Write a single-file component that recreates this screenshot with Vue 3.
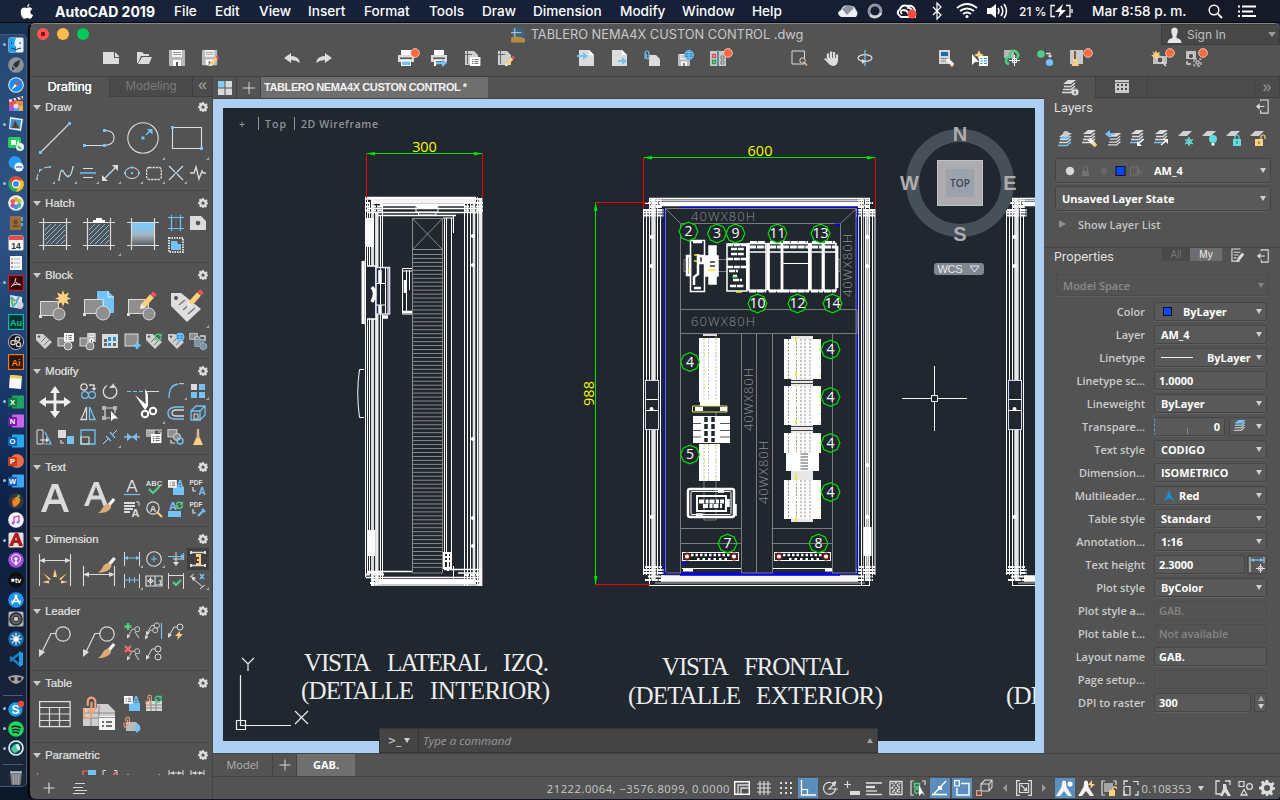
<script setup>
import { h } from 'vue'

const W = '#dcdcdc'
const B = '#73c3f6'
const Y = '#ffd080'
const G = '#4fce86'
const R = '#fb6a70'
const K = '#535353'
const s = (d, col = W, w = 1) => `<path d="${d}" fill="none" stroke="${col}" stroke-width="${w}"/>`
const f = (d, col = W) => `<path d="${d}" fill="${col}"/>`
const o = (x, y, r, fill = 'none', st = 'none', w = 1) =>
  `<circle cx="${x}" cy="${y}" r="${r}" fill="${fill}" stroke="${st}" stroke-width="${w}"/>`
const t = (x, y, size, txt, col = W, wt = 700) =>
  `<text x="${x}" y="${y}" font-size="${size}" font-weight="${wt}" fill="${col}" font-family="Liberation Sans, sans-serif" text-anchor="middle">${txt}</text>`
const g = (x, y, k, body) => `<g transform="translate(${x} ${y}) scale(${k})">${body}</g>`

const Icon = (p) => h('svg', { viewBox: `0 0 ${p.box || 16} ${p.box || 16}`, width: p.size || 16, height: p.size || 16, innerHTML: p.art })
Icon.props = ['art', 'box', 'size']

/* ---- shared parts ---- */
const brush = (x, y, k = 1) => g(x, y, k, s('M17 1L11 8', '#f2f2f2', 3.4) + f('M11 6L14 9Q12 16 0 16Q4 13 5 10Q7 6 11 6Z', '#dcab78'))
const pencil = (x, y, k = 1) => g(x, y, k, s('M3 14L12 4', Y, 5) + s('M12.5 3.5L15 1', '#f4535c', 5) + f('M0 17L1 11.5L5.5 16Z', '#eee'))
const page = f('M1 0H11L16 5V16H1Z') + f('M11 0V5H16Z', '#fff')
const badge = (x = 17, y = 3) => o(x, y, 4.4, '#ff6a3c', '#e9d5cd', 0.8)
const disk = (x = 0, y = 0, k = 1) => g(x, y, k, f('M0 0H16V16H0Z', '#b9b9b9') + f('M3 0H13V7H3Z', '#f4f4f4') + s('M4 2.5H12M4 4.5H12', '#999') + f('M4 10H12V16H4Z', '#fff') + f('M7 12H9V16H7Z', '#555'))
const layers = (c3 = W) => f('M6 0H14L9 4H1Z') + s('M2 6.5H9L13 3', W, 1.3) + s('M1 9.5H9L13 6', W, 1.3) + s('M0 12.5H9L13 9', c3, 1.3)
const tbl = (x, y, k) => g(x, y, k, f('M0 0H16V14H0Z', '#fff') + s('M3 4H5M7 4H13M3 7H5M7 7H13M3 10H5M7 10H13', '#666', 1.5))
const globe = (x, y, r) => o(x, y, r, '#3d8fca', B) + s(`M${x - r} ${y}H${x + r}M${x} ${y - r}V${y + r}M${x - r + 1} ${y - 2.5}H${x + r - 1}M${x - r + 1} ${y + 2.5}H${x + r - 1}`, '#7dd0ff', 0.8)
const tag = f('M0 1H7L16 9L9 16L0 7Z', '#cfcfcf') + o(3, 3.6, 1.2, K) + s('M5 9L10 4M8 12L13 7', '#777', 1)
const blk = (x, y, k, c1 = W) => g(x, y, k, `<rect x="1" y="3" width="10" height="8" fill="#8d8d8d" stroke="${c1}"/><circle cx="11" cy="11" r="4" fill="#8d8d8d" stroke="${c1}"/>`)
const cyc = (x, y, k) => g(x, y, k, s('M2 6A5 5 0 0 1 11 4M12 7A5 5 0 0 1 3 10', G, 2.4) + f('M13 0V6H7ZM1 13V7H7Z', G))
const link = (x, y, k) => g(x, y, k, s('M3 7V3.5A3 3 0 0 1 9 3.5V9A3 3 0 0 1 3 9M6 7V4M6 7V14A3 3 0 0 1 0 14V9', '#f0a47c', 1.7))
const leader = (x, y, k) => g(x, y, k, s('M1 14L6 5H9') + o(12, 5, 3, 'none', W) + f('M0 16L0 11L4 13Z'))

/* ---- left tool palettes: big tools span two columns and rows ---- */
const hatchFrame = s('M0 4.5H32M0 27.5H32M4.5 0V32M27.5 0V32', W, 1.2)
const hatchLines = s('M6 12L12 6M6 17L17 6M6 22L22 6M7 26L26 7M12 26L26 12M17 26L26 17M22 26L26 22', B)
const big = (art, more) => ({ big: true, art, more })
const sm = (art, more, on) => ({ art, more, on })
const none = { art: '' }

const sections = [
  { name: 'Draw', tools: [
    big(s('M2 30L30 2', W, 1.1) + f('M0 29H3V32H0ZM29 0H32V3H29Z', B)),
    big(s('M2 23.5H21M21 8.5Q31 8 31 16Q31 23 21 23.5', W, 1.1) + f('M0 22H3V25H0ZM20 22H23V25H20ZM20 7H23V10H20Z', B)),
    big(o(16, 16, 15.2, 'none', W, 1.1) + f('M14.5 14.5H17.5V17.5H14.5ZM20 7H25.5V12.5Z', B) + s('M19 13L24 8', B, 1.4), 1),
    big(s('M1.5 5.5H30.5V26.5H1.5Z', W, 1.1) + f('M0 4H3V7H0ZM29 25H32V28H29Z', B), 1),
    sm(s('M1 14Q2 2 14 2', W) .replace('/>', ' stroke-dasharray="5 2"/>') + f('M0 13H2V15H0ZM3 4H5V6H3ZM13 1H15V3H13Z', B), 1),
    sm(s('M1 15Q3 2 5 6T10 12Q13 12 15 2', W, 1.2) + f('M0 14H2V16H0ZM4 5H6V7H4ZM10 10H12V12H10ZM14 1H16V3H14Z', B), 1),
    sm(s('M3 3.5H13M3 12.5H13', W, 1.2) + s('M0 8H16', B, 1.3), 1),
    sm(s('M2 14L14 2', W, 1.3) + f('M0 16V10L6 16ZM16 0V6L10 0Z') + f('M7 7H9V9H7Z', B), 1),
    sm('<ellipse cx="8" cy="8" rx="7" ry="5.5" fill="none" stroke="#dcdcdc"/>' + f('M7 7H9V9H7ZM7 1.5H9V3.5H7ZM0 7H2V9H0ZM14 7H16V9H14Z', B), 1),
    sm('<rect x=".7" y="2.5" width="14.6" height="12" rx="2.5" fill="none" stroke="#dcdcdc" stroke-width="1.3" stroke-dasharray="2.4 .9"/>', 1),
    sm(s('M1 1L7 7M15 1L9 7M7 9L1 15M9 9L15 15', W, 1.1) + f('M7 7H9V9H7Z', B), 1),
    sm(s('M0 8H4L6 2L9 14L12 6L13 8H16', W, 1.4)),
  ] },
  { name: 'Hatch', tools: [
    big(hatchFrame + hatchLines),
    big(hatchFrame + hatchLines + f('M10 2H13V0H19V2H22V5H10Z', '#fff'), 1),
    big('<defs><linearGradient id="hg" x2="0" y2="1"><stop offset=".15" stop-color="#7cc9fa"/><stop offset=".55" stop-color="#a5b4c0"/><stop offset="1" stop-color="#555"/></linearGradient></defs><rect x="4" y="4" width="24" height="24" fill="url(#hg)"/>' + hatchFrame),
    sm(s('M0 2.5H16M0 13.5H16M3.5 0V16M12.5 0V16', B, 1.2)), sm(f('M0 1H11L16 6V15H0Z') + o(8, 8, 2.3, K)),
    sm(s('M1 1H15V15H1Z', W, 2).replace('/>', ' stroke-dasharray="1.5 1"/>') + f('M3 4H9L10 7H13V13H3Z', B)), none,
  ] },
  { name: 'Block', tools: [
    big(f('M1 11H19V25H1Z', '#8f8f8f') + s('M1.5 11.5H19.5V25.5H1.5Z') + o(20, 24, 6, '#8f8f8f', W) + f('M0 25H3V28H0Z') + f('M24 0L25.5 4.5L30 2.5L28 7L32 8.5L28 10L30 14.5L25.5 12.5L24 17L22.5 12.5L18 14.5L20 10L16 8.5L20 7L18 2.5L22.5 4.5Z', Y)),
    big(f('M14 1H25L31 7V23H14Z', B) + s('M25 1V7H31', '#dff2ff') + f('M1 9H19V23H1Z', '#8f8f8f') + s('M1.5 9.5H20.5V23.5H1.5Z') + o(20, 23, 7, '#8f8f8f', W) + f('M0 23H3V26H0Z')),
    big(f('M1 9H21V23H1Z', '#8f8f8f') + s('M1.5 9.5H21.5V23.5H1.5Z') + o(22, 24, 6, '#8f8f8f', W) + f('M0 23H3V26H0Z') + pencil(13, 2, 1)),
    big(f('M0 3H10L30 19L16 32L0 16Z', '#dedede') + o(5, 8, 2, K) + s('M8 15L14 10M12 20L21 12M17 24L24 18', '#777', 1.4) + pencil(16, 0, 1), 1),
    sm(tag), sm(blk(-1, 2, 1) + tbl(6, 0, 0.62)), sm(blk(-1, 2, 1) + disk(7, 0, 0.56)),
    sm(f('M0 1H16V15H0Z') + f('M2 6H5V9H2ZM2 10H5V13H2Z', '#666') + f('M6 4H9V8H6ZM6 10H9V13H6ZM11 4H14V8H11Z', '#1594e8') + f('M11 10H14V13H11Z', '#666')),
    sm('<rect x="1" y="1" width="13" height="12" fill="#8d8d8d" stroke="#dcdcdc"/>' + s('M13 9V16M9.5 12.5H16.5', B, 2.6)),
    sm(tag + cyc(8, 0, 0.6)), sm(tag + globe(12, 4, 4)), sm(blk(-1, -2, 0.75) + s('M10 3H15V8', W, 1.4) + blk(4, 4, 0.85, B)),
  ] },
  { name: 'Modify', tools: [
    big(f('M16 0L21 7H17.4V14.6H25V11L32 16L25 21V17.4H17.4V25H21L16 32L11 25H14.6V17.4H7V21L0 16L7 11V14.6H14.6V7H11Z', '#f0f0f0')),
    sm(o(4, 4, 3.2, 'none', W, 1.2) + s('M9 2H14V6', W, 1.3) + f('M11.5 5H16.5L14 8Z') + o(5, 12, 3.4, 'none', B, 1.2) + o(12, 12, 3.4, 'none', B, 1.2)),
    sm(s('M5 2.5A6.8 6.8 0 1 0 11.5 2.7', W, 1.4) + f('M12 0V5H7Z')),
    big(s('M0 5.5H17', B, 1.1).replace('/>', ' stroke-dasharray="4 2"/>') + s('M19 5.5H32', W, 1) + f('M18 3L21 8V20L19 22ZM8 9L21 20L18 24Z', '#fff') + o(18, 28, 3.2, 'none', '#fff', 2) + o(26, 25, 3.2, 'none', '#fff', 2), 1),
    sm(s('M1 15Q1 2 10 1', B, 1.3) + s('M11 .7H16', W), 1), sm(f('M1 1H7V7H1Z') + f('M9 1H15V7H9ZM1 9H7V15H1ZM9 9H15V15H9Z', B), 1),
    sm(s('M6.5 2V14.5H1Z', W, 1.3) + s('M9.5 2V14.5H15Z', B, 1.3)), sm(s('M2 3H14M3 2V14M2 13H8M13 2V8', W, 1.2) + f('M0 1H4V5H0ZM11 1H15V5H11ZM0 11H4V15H0Z', '#b5b5b5') + f('M9 6V16L12 13.5H16Z', '#fff')),
    sm(s('M16 2H7Q0 3 0 8Q0 14 7 14H16', B, 1.4) + s('M16 5H8Q4 5 4 8Q4 11 8 11H16', W, 1.3)), sm(s('M1 6H10V15H1ZM1 6L6 1H15V10L10 15M10 6L15 1', B, 1.3) + s('M4 9H8V14H4Z')),
    sm(s('M1 1H7V15H1Z', W, 1) + s('M9 3L15 15H8', B, 1.2) + s('M4 11H11', W, 1.2) + f('M10 8L13 11L10 14Z')),
    sm(f('M0 1H8V9H0Z') + s('M3 11V14H6', W, 1.2) + f('M9 7H16V15H9Z', B)), sm(s('M1 1H15V15H1Z', B, 1.3) + s('M1 8H9V15H1Z', W, 1.2)),
    sm(s('M1 15L6 10M10 6L15 1') + s('M4 7L9 12M8 3L13 9', B, 1.3), 1), sm(s('M0 8H16', W) + f('M3 4L8 8L3 12ZM13 4L8 8L13 12Z', B)),
    sm(f('M0 1H9V8H0Z', '#aaa') + s('M0 1H16M12 3H15V6', W, 1.2) + tbl(5, 5, 0.65)), sm(blk(-1, -2, 0.9) + s('M3 11V14H7', W, 1.2) + o(12, 12, 3, 'none', B, 1.4)),
    sm(f('M7 0H9L9.5 9H6.5Z', '#e0b98c') + f('M6 9H10L13 16H3Z', Y)),
  ] },
  { name: 'Text', tools: [
    big(f('M13 2H19L30 30H25L21.8 22H10L7 30H2ZM12 17.5H20L16 6.5Z', '#dadada').replace('/>', ' fill-rule="evenodd"/>')),
    big(f('M11 0H15.5L25 24H20.5L18 17.5H8L5.5 24H1ZM9.6 13.6H16.4L13 4.5Z', '#dadada').replace('/>', ' fill-rule="evenodd"/>') + brush(15, 16, 0.95)),
    sm(t(8, 13, 17, 'A', W, 400) + s('M0 15.5H16', B, 1.2)), sm(t(8, 6.5, 7.6, 'ABC') + s('M3 10L7 14L14 7', G, 2.2)),
    sm(f('M5 8H16V16H5Z', B) + tbl(0, 1, 0.55) + t(12, 9, 10, 'A', B)), sm(t(6, 5.5, 6.6, 'PDF') + s('M3 8V12H6', W, 1.2) + t(12, 15.5, 10, 'A', B)),
    sm(s('M0 2H11M0 5H11M0 8H9M0 11H6', W, 1.8) + s('M12 1H15V5') + t(11.5, 16, 11, 'A')), sm(o(7, 7, 6.2, 'none', W, 1.2) + t(7, 10.5, 9, 'A') + s('M11 11L16 16', Y, 2)),
    sm(t(5, 9, 11, 'A', B) + cyc(7, 0, 0.62) + f('M0 10H13V16H0Z', B)), sm(t(6, 5.5, 6.6, 'PDF') + s('M3 8V12H6', W, 1.2) + s('M8 15L14 9M12 8L15 11', B, 2.2)),
  ] },
  { name: 'Dimension', tools: [
    big(s('M.5 0V32M31.5 0V32M2 6.5H30', W, 1.1) + f('M0 6.5L6 4V9ZM32 6.5L26 4V9Z') + g(16, 28, 1, f('M-2 -5L0 -13L2 -5ZM-12 -9L-4 -3L-6 -2ZM12 -9L4 -3L6 -2ZM-13 0L-6 -1.5V1.5ZM13 0L6 -1.5V1.5Z', Y))),
    big(s('M.5 12V32M31.5 12V32M2 20.5H30', W, 1.1) + f('M0 20.5L6 18V23ZM32 20.5L26 18V23Z') + brush(15, 3, 0.98)),
    sm(s('M.5 1V15M15.5 1V15') + s('M1 7H15', B) + f('M0 7L4 5V9ZM16 7L12 5V9Z', B), 1), sm(o(8, 8, 7.3, 'none', W, 1.1) + s('M8 5V11M5 8H11', B), 1),
    sm(s('M8 1V13M5 8H16', W) + s('M0 5.5H13M15.5 2V9', B, 1.2) + f('M13 3V8L16 5.5Z', B) + f('M5 11H11L8 15Z')), sm(s('M1 1.5H15M1 14.5H15', W, 1.3) + f('M0 0H2V3H0ZM14 0H16V3H14ZM0 13H2V16H0ZM14 13H16V16H14Z') + f('M6 3H11V14H6V12H9V10H7V8H9V6H6Z', Y), 0, 1),
    sm(s('M.5 1V15M15.5 1V15') + s('M0 7H16M5.5 4V10M10.5 4V10', B), 1), sm(s('M0 3H16V13H0ZM9 3V13', W, 1.2) + s('M1 8H8M4.5 4V12') + o(4.5, 8, 2, 'none', W) + t(13, 12, 8, '.1')),
    sm(s('M.5 0V16M15.5 0V16M1 2.5H15') + s('M5 9L8 12L13 7', G, 2.2)), sm(s('M2 5L13 14M0 4L4 1M10 16L15 12') + f('M1 3L6 5L3 8Z') + s('M10 1L14 6M14 1L10 6', B, 1.5), 1),
  ] },
  { name: 'Leader', tools: [
    big(s('M2 28L12 7.5H17', W, 1.2) + o(24, 8, 7.2, 'none', W, 1.2) + f('M0 31V23L6 26Z')),
    big(s('M2 28L12 7.5H17', W, 1.2) + o(24, 8, 7.2, 'none', W, 1.2) + f('M0 31V23L6 26Z') + brush(15, 17, 0.95)),
    sm(s('M4 0V7M.5 3.5H7.5', G, 2.4) + leader(3, 2, 0.85) + s('M11 9L15 15', W)), sm(leader(-1, 3, 0.85) + leader(0, -2, 0.9) + s('M15.5 0V16', B, 1.2)), sm(leader(0, -1, 1) + f('M12 8L7 13H10L9 17L15 11H12Z', Y)), none,
    sm(s('M1 1L7 7M7 1L1 7', R, 2.2) + leader(3, 2, 0.85) + s('M11 9L15 15', W)), sm(leader(0, -1, 1) + o(12, 12, 3, 'none', W)), none, none,
  ] },
  { name: 'Table', tools: [
    big('<rect x=".6" y="3.6" width="30.5" height="25" fill="none" stroke="#dcdcdc" stroke-width="1.3"/>' + s('M0 9.5H31M0 16H31M0 22.5H31M10.5 9V29M20.5 9V29', W, 1.2)),
    big(f('M0 10H14V6H25L32 13V28H0Z', '#cfcfcf') + s('M0 15H32M0 20H32M8 10V28M16 7V28', '#888') + link(1, -1, 1.25) + f('M16 18H32V32H16Z', '#f4f4f4') + s('M16 19.5H32', '#999') + s('M19 24H21M23 24H29M19 28H21M23 28H29', '#444', 1.4)),
    sm(f('M5 8H16V16H5Z', B) + tbl(0, 1, 0.55) + t(12, 9, 10, 'A', B)), sm(f('M2 6H16V16H0V8Z') + s('M0 10H16M0 13H16M5 6V16M10 6V16', '#888') + link(0, 0, 0.6) + cyc(8, 0, 0.6)), none, none,
    sm(f('M2 5H12L16 9V14H2Z', '#bbb') + link(0, 0, 0.6) + s('M13 7V13', B, 3) + f('M9 11H17L13 16Z', B)), none, none, none,
  ] },
  { name: 'Parametric', tools: [
    sm(s('M1.500 7V16', R, 1.2)), none, sm(s('M3 16V5H8', R, 1.2) + f('M8 4H16V11H8Z', B)), sm(s('M4 4.500H1V16M12 4.500H15V16') + s('M4 11L7 14L14 6', R, 1.4) + f('M9 14L12 11L16 14Z', Y)),
    sm(s('M4 8V16M8 12V16')), sm(s('M2 12V16M13 8V16M11 12V16')), sm(s('M1 4V16M15 4V16M1 7H15') + f('M3 7L6 5V9ZM13 7L10 5V9Z') + f('M6 10H11V14H6Z', B)), sm(s('M1 4V16M14 4V16M1 7H14') + f('M3 7L6 5V9ZM12 7L9 5V9Z') + f('M9 11H15V15H9Z', Y)),
  ] },
]

/* ---- main toolbar ---- */
const printer = f('M3 0H13V6H3Z', '#fff') + f('M0 5H16V12H0Z') + f('M2 7.500H14V9H2Z', '#555') + f('M3 10H13V16H3Z', '#fff')
const plots = f('M1 1H10L14 5V15H1Z', '#cfcfcf') + s('M3.5 0V14M0 4.5H8', '#666')
const toolbar = [
  [f('M0 2H11V8H16V14H0Z', W) + f('M12 2L16 6V7H12Z', W), f('M1 2H6L8 4H13V6H5L2 13H1Z') + f('M6 7H16L13 14H2Z'), disk(), disk(0, 0, 0.95) + pencil(7, 6, 0.6)],
  [f('M0 8L7 3V6Q15 6 16 13Q12 10 7 10V13Z'), f('M16 8L9 3V6Q1 6 0 13Q4 10 9 10V13Z')],
  [printer + f('M4 11.500H12V15H4Z', B) + badge(17, 3), printer + f('M5 11H12V16H5Z', K) + s('M5 13H12', B, 2.4) + f('M11 9V17L16 13Z', B), plots + tbl(6, 7, 0.65), plots + pencil(8, 6, 0.6)],
  [page + s('M-1 6H7', B, 2.2) + f('M5 2V10L10 6Z', B), page + s('M7 11H12', B, 2.2) + f('M11 7V15L16 11Z', B), f('M5 5H12L16 9V16H5Z') + s('M1 9V3A2 2 0 0 1 5 3V8A1.500 1.500 0 0 1 2.500 8V4', B, 1.2), disk(1, 4, 0.75) + globe(12, 5, 4.5), f('M0 1H7V16H0ZM9 1H16V16H9Z', '#c9c9c9') + s('M8 0V16', B) + s('M2.5 4.5H5.5V7.5H2.5Z', '#e5484f', 1.3) + s('M2.5 10.5H5.5V13.5H2.5Z', '#14a354', 1.3) + s('M11 6H14V9H11ZM11 11H14V14H11Z', '#777') + badge(18, 3)],
  [s('M1 1H13.5V14H1Z', W) + o(11.5, 10.5, 2.7, K, W) + s('M13.5 12.5L16 15.5', '#e5b596', 1.4), s('M4 9V3.4M7 8V1.4M10 8V2M13 9V4.5', W, 2.2) + f('M3 8H14V11Q13 16 9 16Q6 16 4 13L0 9L1.5 8L4 10Z'), '<ellipse cx="8" cy="8" rx="7" ry="3.4" fill="none" stroke="#dcdcdc" stroke-width="1.2"/>' + s('M8 0V16', B, 1.3) + f('M5 9L9 11.3L5 14Z')],
  [f('M0 0H11V14H0Z', '#d5d5d5') + f('M2 2H9V6H2Z', '#1f6ca4') + s('M2 8.5H9M2 11H7', '#888') + s('M8 9L14 15', '#fff', 3.2) + s('M12 14L14 16', '#ffdca0', 3), f('M0 4V15L3 12H7Z', '#fff') + f('M7 0L8.5 3.5L12 5L8.5 6.5L7 10L5.5 6.5L2 5L5.5 3.5Z', Y) + f('M7 6H16V16H7Z', '#fff') + s('M8.5 8.5H10.5M12 8.5H15M8.5 11H10.5M12 11H15M8.5 13.5H10.5M12 13.5H15', '#1594e8', 1.2), f('M0 0H10V8H0Z', '#b7b7b7') + s('M5 14A3.500 3.500 0 1 1 6 7A4.200 4.200 0 1 1 13 8', G, 2.6) + s('M10.5 5V16M5 10.5H16', '#fff', 1.1) + s('M8.5 8.5H12.5V12.5H8.5Z', '#fff'), o(4, 4, 3.8, G) + s('M9 3.5H13V6', W, 1.3) + f('M10.5 5.5H15.5L13 8Z') + o(12.5, 12.5, 3.6, B), f('M0 0H13V14H0Z', '#c9c9c9') + s('M5 1V9', '#8a5a35', 2) + f('M4 9H6.500L9 16H1.500Z', Y) + badge(18, 3)],
  [f('M1 6H15V14H1Z', '#bfbfbf') + f('M4 0L5 3L8 2L7 5L9 6L6 7L4 10L3 7L-1 6L2 4L0 1L3 3Z', Y) + o(8, 10, 3, K, W) + s('M10 12L14 16', W, 1.4) + badge(18, 3), f('M1 1H11V9H1Z', '#bfbfbf') + o(6, 6, 2.8, K, W) + s('M2 11V14H6', W, 1.3) + s('M9 9H16V16H9Z', W, 1).replace('/>', ' stroke-dasharray="3 2"/>') + s('M11 11H14V14H11Z') + badge(18, 3)],
]

/* ---- layer tools ---- */
const sheet = f('M5 1H14L9 6H0Z', '#d2d2d2')
const layerTools = [
  g(0, 3, 1, layers(B) + f('M5 3H14L9 6H1Z', B)) + o(8, 4, 3, '#ccc'), layers() + s('M7 9L13 15', '#eee', 3.6) + s('M11 13L14 16', Y, 3.4), g(2, 3, 0.95, layers()) + s('M2 4H9', B, 2) + f('M-1 4L4 0V8Z', B), layers(B) + s('M14 9L8 14', '#fff', 1.2) + f('M7 11V16H12Z', '#fff'), layers(B) + s('M7 15L13 10', '#fff', 1.2) + f('M9 9H14V14Z', '#fff'),
  sheet + s('M11 7V16M7 9.5L15 14M15 9.5L7 14', '#5fe0d6', 1.4) + o(11, 11.6, 2.5, 'none', '#5fe0d6'), sheet + o(11, 9, 4, '#5fdde0') + f('M9.5 13H12.5V15.5H9.5Z', '#fff'), sheet + f('M7 9H15V16H7Z', '#5fdde0') + s('M9 9V7A2 2 0 0 1 13 7V9', '#5fdde0', 1.2) + f('M10.5 11H11.5V14H10.5Z', '#24747c'), sheet + f('M5 9H13V16H5Z', Y) + s('M11 9V7A2 2 0 0 1 15 7V9', Y, 1.2) + f('M8.5 11H9.5V14H8.5Z', '#735828'),
]

/* ---- status bar ---- */
const human = (x = 0) => g(x, 0, 1, o(8, 2.5, 1.9, '#fff') + f('M6 3H10L10.5 7L16 16H12L8 11L4 16H0L5.5 7Z', '#f4f4f4'))
const status = [
  { a: s('M.7 1.7H15.3V14.3H.7Z', '#fff', 1.4) + s('M4 14V5H15M7 14V8H15', W, 1.3) },
  { a: s('M4 1V15M8 1V15M12 1V15M1 4H15M1 8H15M1 12H15', W, 1.2) },
  { a: f('M2 2H4V4H2ZM7 2H9V4H7ZM12 2H14V4H12ZM2 7H4V9H2ZM7 7H9V9H7ZM12 7H14V9H12ZM2 12H4V14H2ZM7 12H9V14H7ZM12 12H14V14H12Z') },
  { a: s('M1.5 0V15H16', '#fff', 1.3) + s('M1.5 9.5H7.5V15', '#fff', 1.2), on: 1 },
  { a: s('M13.5 8A6 6 0 1 1 9 2.500M6 9H16M7 9L14 2', W, 1.2) + f('M9 3L14 1L13 7Z', W) },
  { a: s('M3.5 1V8M0 4.5H7', W, 1.2) + f('M6 11H16V15H6Z') },
  { a: s('M0 3H16', W, 1.6) + s('M0 7H9', W, 2.5) + s('M0 11H11', W, 1.4) + s('M0 14.5H16', W, 1.4) },
  { a: s('M2 1.5H14V14.5H2Z', W, 1.3) + s('M4 3L12 13M12 3L4 13M4 8L8 3L12 8L8 13Z', W, 1.8).replace('/>', ' stroke-dasharray="1.5 1.2"/>') },
  { a: s('M4 1H1V15H4M12 1H15V5', W, 1.2) + s('M4.5 3.5H9.5V7H4.5Z', G, 1.6) + o(7, 11, 2.3, 'none', G, 1.4) + f('M9 5V16L12 13L15 16Z', '#fff') },
  { a: s('M1 15L14 1M0 14.5H15', '#fff', 1.4) + f('M6 6H10V10H6Z', '#fff'), on: 1 },
  { a: s('M7 3.5H15V15H3V8', '#fff', 1.4) + s('M.7 .7H5.3V6H.7Z', '#fff', 1.2), on: 1 },
  { a: s('M5 4H13V11H5ZM5 4L9 0H16V7L13 11M13 4L16 0', W, 1.1) + s('M.6 10.6H5.4V15.4H.6Z', '#f3a17b', 1.2) },
  { a: f('M10 4V12L6 8Z', '#999') },
  { a: s('M4 .7H.7V15.3H4M12 .7H15.3V15.3H12', W, 1.3) + s('M3.5 3.5H12.5V12.5H3.5ZM5 5L10 10', W, 1.2) + f('M11 7V11H7Z') },
  { a: f('M6 4V12L10 8Z', '#999') },
  { a: human(-1) + o(13, 4, 2.6, '#fff'), on: 1 },
  { a: human(-1) + f('M13 0L9 5H12L11 9L16 4H13Z', Y) },
  { a: s('M4 1H1V15H4M12 1H15V5', W, 1.2) + f('M3 3H12V12H3Z', '#a4a4a4') + f('M8 10H14V16H8Z', Y) + s('M12 10V8A2 2 0 0 1 15.5 8V9', Y, 1.3) },
  { a: s('M5 1H1V5M1 11V15H4M12 15H15V11', W, 1.3) + s('M1 6.500H7V15H1ZM10 1.500H15V5', W, 1.2) },
]
const status2 = [
  s('M1 5V1H5M10 1H15V5M1 5V14H6', W, 1.3) + f('M8 4H11L12 9L16 16H12.5L10 12L7.5 16H5L8 9Z'),
  s('M2 1.5H7V6.5H2Z', W, 1.2) + o(12.5, 6.5, 2.9, 'none', W, 1.3) + s('M7 9.5L10 15H4Z', W, 1.3),
  f('M6.7 0H9.3L9.8 2.3L12 3.2L14 1.8L15.4 4L13.8 6L14 7L16 7.5V9.5L13.8 10L13 12L14.2 14L12 15.4L10.2 13.8L9 16H7L6.2 13.8L4 14.8L2 13.5L2.8 11.3L2 9.8L0 9.3V6.8L2.2 6.2L3 4L1.8 2L4 .8L6 2.4ZM8 5A3 3 0 1 0 8 11A3 3 0 1 0 8 5Z').replace('/>', ' fill-rule="evenodd"/>'),
]
const gear = f('M6.7 0H9.3L9.8 2.3L12 3.2L14 1.8L15.4 4L13.8 6L16 7.5V9.5L13.8 10L14.2 14L12 15.4L10.2 13.8L9 16H7L6.2 13.8L4 14.8L2 13.5L2.8 11.3L0 9.3V6.8L2.2 6.2L1.8 2L4 .8L6 2.4ZM8 5.4A2.6 2.6 0 1 0 8 10.6A2.6 2.6 0 1 0 8 5.4Z').replace('/>', ' fill-rule="evenodd"/>')
const dockIn = s('M6 2.5V1H14V15H6V12', W, 1.2) + s('M3 8H10', W, 1.3) + f('M1 8L5 4.5V11.5Z')

/* ---- dock ---- */
const rr = (c) => `<rect x=".5" y=".5" width="15" height="15" rx="1.5" fill="${c}"/>`
const adobe = (bg, fg, txt) => `<rect x=".6" y=".6" width="14.8" height="14.8" fill="${bg}" stroke="${fg}" stroke-width="1.1"/>` + t(8, 11.5, 9, txt, fg)
const office = (c1, c2, l) => `<rect x="4" y="1.5" width="12" height="13" rx="1" fill="${c1}"/><rect x="0" y="4" width="9" height="9" rx="1" fill="${c2}"/>` + t(4.5, 11.3, 7.5, l, '#fff')
const app = (n, a, dot, k) => ({ n, a, dot, k })
const dock = [
  app('finder', rr('#e8f1f8') + f('M1 1H8Q6 5 6.5 9H8V15H1Z', '#1da5f2') + s('M3.5 5V7M12 5V7M3 11Q8 14 13 11', '#18385c', 1), 1),
  app('launch', o(8, 8, 7.8, '#8d9499') + f('M12 3Q7 4 5 8L8 11Q12 8 12 3ZM4 9L7 12L4 13Z', '#2f3437')),
  app('safari', o(8, 8, 7.8, '#e6e9ec') + o(8, 8, 6.8, '#1c8af0') + f('M13 3L9 9L7 7Z', '#f0433a') + f('M3 13L7 7L9 9Z', '#fff')),
  app('cut', f('M1 5H15V14Q15 15 14 15H2Q1 15 1 14Z', '#f2b43e') + f('M1 5H8V10H1Z', '#ed4f58') + f('M8 5H15V10H8Z', '#f7853c') + f('M1 10H6V15H2Q1 15 1 14Z', '#a25be0') + f('M6 10H11V15H6Z', '#4aa6ee') + o(8, 10, 2.5, '#f4dce8') + f('M1 3.500L15 0V3L1 6Z', '#e4e4e4') + s('M4 3L6 5M8 2L10 4M12 1L14 3', '#333', 1.6)),
  app('preview', f('M2 1L15 3L13 15L1 13Z', '#e8eef4') + f('M3 3L13 4L12 13L2 12Z', '#468dcc') + f('M7 4L11 12H4Z', '#54422e'), 1),
  app('facetime', `<rect x="0" y="1" width="13" height="11" rx="2" fill="#28cf57"/>` + f('M3 4H8V9H3ZM9 6L11 4V9L9 7Z', '#fff') + o(12, 11, 4, '#ecf7ee') + s('M10 10L13 13', '#24bc4d', 1.7)),
  app('messages', o(7, 6.5, 6.5, '#2899f5') + o(11, 11, 4.6, '#eef5fb') + s('M8 11H14', '#4c88bd', 1.5)),
  app('chrome', o(8, 8, 7.8, '#34a853') + f('M1.5 4A7.8 7.8 0 0 1 15 4.5H8L5 9.5Z', '#ea4335') + f('M15 4.5A7.8 7.8 0 0 1 8 15.8L11 9L8 4.5Z', '#fbc116') + o(8, 8, 3.6, '#4285f4', '#fff', 1.2), 1),
  app('photos', o(8, 8, 7.8, '#f5f5f5') + o(8, 4.5, 2.4, '#f9a233') + o(11.3, 6.5, 2.4, '#aacb4c') + o(11, 10.5, 2.4, '#48b7a2') + o(8, 12, 2.4, '#4b8fd6') + o(4.8, 10.5, 2.4, '#a05fba') + o(4.8, 6.3, 2.4, '#ec5a51')),
  app('contacts', f('M2 1H13V15H2Z', '#9a6b3d') + f('M13 2H15V6H13ZM13 8H15V11H13Z', '#67b5a3') + o(7.5, 7, 2.3, '#714a25') + f('M4 12Q7.5 7 11 12Z', '#714a25')),
  app('calendar', rr('#f5f5f5') + f('M1 1H15V5H1Z', '#ea4a45') + t(8, 13.5, 8.5, '14', '#333')),
  app('reminders', f('M2 1H14V15H2Z', '#f6f6f6') + s('M6 4H12M6 8H12M6 12H12', '#b5b5b5') + o(4, 4, 1, '#f0912c') + o(4, 8, 1, '#e34a42') + o(4, 12, 1, '#3a86dd')),
  app('acrobat', `<rect x=".6" y=".6" width="14.8" height="14.8" fill="#3a0505" stroke="#c11b20" stroke-width="1.2"/>` + s('M8 3Q8 8 3 12M8 7Q9 10 13 10M5 10Q9 9 12 9', '#f2dfdf'), 1),
  app('maps', f('M2 1L14 3L14 15L2 13Z', '#e4e6df') + s('M3 3L12 12M11 3L5 13', '#4ba3e6', 2) + s('M4 8H8', '#f2cf50', 2) + s('M3 4L5 13', '#62bd62', 2) + o(12, 11, 3.5, '#ccd2d6')),
  app('audition', adobe('#00302f', '#00c8a8', 'Au')),
  app('obs', o(8, 8, 7.6, '#151517', '#c4c4c6', 0.9) + o(9.500, 5, 2.2, '#151517', '#d2d2d3', 1.3) + o(5, 8.500, 2.2, '#151517', '#d2d2d3', 1.3) + o(10.500, 10.500, 2.2, '#151517', '#d2d2d3', 1.3)),
  app('illustrator', adobe('#2e1404', '#f58220', 'Ai')),
  app('notes', f('M2 1L14 2L13 15L1 14Z', '#fafafa') + f('M2 1L14 2V5L2 4Z', '#f6ce4d')),
  app('excel', office('#21a366', '#107c41', 'X'), 1),
  app('onenote', office('#ca64ea', '#7719aa', 'N')),
  app('outlook', office('#28a8ea', '#0a63b8', 'O')),
  app('powerpoint', o(9, 8, 7, '#ea6e4b') + `<rect x="0" y="4" width="9" height="9" rx="1" fill="#c43e1c"/>` + t(4.5, 11.3, 7.5, 'P', '#fff')),
  app('word', office('#41a5ee', '#185abd', 'W'), 1),
  app('fruity', o(8, 8, 7.8, '#35383b') + f('M8 4Q13 4 12 8Q11 12 6 14Q3 9 5 6Z', '#f58a25') + f('M8 5L11 1L12 4Z', '#72ca44') + f('M5 6L8 5L6 9Z', '#e54831')),
  app('music', o(8, 8, 7.8, '#f6f4f8') + s('M6 11V5L11 4V10', '#e14aa3', 1.4) + o(5, 11, 1.5, '#b950e0') + o(10, 10, 1.5, '#5b8dfa')),
  app('autocad', rr('#ebe1da') + f('M1 14L7 1H10L15 14H11L10 11H6L5 14ZM7 8H9L8 5Z', '#b3171f'), 1),
  app('podcasts', o(8, 8, 7.8, '#a24ddb') + o(8, 7, 4.5, 'none', '#fff') + o(8, 7, 1.7, '#fff') + s('M8 9V13', '#fff', 2)),
  app('tv', o(8, 8, 7.8, '#101012') + o(4.800, 8.300, 1.7, '#fff') + t(10, 10.5, 7, 'tv', '#fff')),
  app('store', o(8, 8, 7.8, '#1c94f4') + s('M9 3L4 12M7 3L12 12M3 9.5H13', '#fff', 1.6)),
  app('prefs', rr('#b0b3b6') + o(8, 8, 6, '#5c6064', '#2b2e31', 1.5) + o(8, 8, 2.7, '#c8cacc', '#333', 1)),
  app('wheel', o(8, 8, 7.8, '#1c6eaf') + s('M8 2V14M2 8H14M4 4L12 12M12 4L4 12', '#dceaf5', 1.2) + o(8, 8, 2.5, '#fff')),
  app('code', s('M12 2L2 10M12 14L2 6', '#1a80c4', 2.4) + f('M11 0L15 2V14L11 16Z', '#2798e2')),
  app('alien', f('M0 6Q8 2 16 6Q15 11 8 13Q1 11 0 6Z', '#a1a3a5') + o(4.5, 8, 2, '#222') + o(11.5, 8, 2, '#222')),
  app('sep', '', 0, 1),
  app('skype', o(7.5, 8.5, 7.2, '#1b9be0') + t(7.5, 13, 12, 'S', '#fff') + o(13, 3, 3.2, '#e8434a'), 1),
  app('spotify', o(8, 8, 7.8, '#1ed760') + s('M3.5 6Q9 4 13 7M4 9Q8 7.5 12 9.7M4.5 11.5Q8 10.5 11 12.3', '#111', 1.4), 1),
  app('webex', o(8, 8, 7.8, '#e9f2f4') + o(8, 8, 6.2, '#14405a') + f('M3 9Q6 3 11 4Q12 12 7 13Q4 12 3 9Z', '#4fcb9f') + f('M8 4Q13 5 12 10Q9 12 8 4Z', '#eaf7f3'), 1),
  app('sep2', '', 0, 1),
  app('trash', f('M2 2H14L12.5 15H3.5Z', '#777d83') + s('M2 2H14', '#c3c6c9', 1.5) + s('M5 4L6 14M8 4V14M11 4L10 14', '#a8adb2')),
]

const menus = [['File', 41], ['Edit', 44], ['View', 49], ['Insert', 56], ['Format', 65], ['Tools', 53], ['Draw', 51], ['Dimension', 87], ['Modify', 62], ['Window', 70], ['Help', 40]]

const props = [
  { l: 'Color', v: 'ByLayer', k: 'color' }, { l: 'Layer', v: 'AM_4', k: 'sel' }, { l: 'Linetype', v: 'ByLayer', k: 'line' },
  { l: 'Linetype sc...', v: '1.0000', k: 'inp' }, { l: 'Lineweight', v: 'ByLayer', k: 'sel' }, { l: 'Transpare...', v: '0', k: 'trans' },
  { l: 'Text style', v: 'CODIGO', k: 'sel' }, { l: 'Dimension...', v: 'ISOMETRICO', k: 'sel' }, { l: 'Multileader...', v: 'Red', k: 'multi' },
  { l: 'Table style', v: 'Standard', k: 'sel' }, { l: 'Annotation...', v: '1:16', k: 'sel' }, { l: 'Text height', v: '2.3000', k: 'height' },
  { l: 'Plot style', v: 'ByColor', k: 'sel' }, { l: 'Plot style a...', v: 'GAB.', k: 'off' }, { l: 'Plot table t...', v: 'Not available', k: 'off' },
  { l: 'Layout name', v: 'GAB.', k: 'inp' }, { l: 'Page setup...', v: '', k: 'off' }, { l: 'DPI to raster', v: '300', k: 'dpi' },
]

/* ---- drawing data ---- */
const slats = Array.from({ length: 80 }, (_, i) => 254.5 + i * 3.96)
const balloons = [[688.5, 231.5, 2], [717, 233.5, 3], [735.5, 233.5, 9], [777.5, 233.5, 11], [820.5, 233.5, 13], [757.5, 303.5, 10], [797.5, 303.5, 12], [832.5, 303.5, 14], [690, 362, 4], [830.5, 349.5, 4], [830.5, 397, 4], [830.5, 443, 4], [830.5, 492, 4], [690, 454.5, 5], [727.5, 543.5, 7], [818.5, 543.5, 8]]
const oct = (x, y) => Array.from({ length: 8 }, (_, i) => `${(x + 9.4 * Math.cos(i * Math.PI / 4)).toFixed(1)},${(y + 9.4 * Math.sin(i * Math.PI / 4)).toFixed(1)}`).join(' ')
const termA = [[699, 338, 21, 64], [699, 444, 21, 37]]
const termB = [[784, 339, 37, 40], [784, 386, 37, 39], [784, 433, 37, 20], [784, 480, 37, 39]]
const modules = [[749, 17], [769, 13], [782, 27], [811, 12], [824, 12]]
const words = [
  [304, 671, 67, 'VISTA'], [387, 671, 101, 'LATERAL'], [503, 671, 46, 'IZQ.'],
  [301, 699, 113, '(DETALLE'], [430, 699, 120, 'INTERIOR)'],
  [662, 675, 67, 'VISTA'], [744, 675, 106, 'FRONTAL'],
  [628, 704, 113, '(DETALLE'], [756, 704, 127, 'EXTERIOR)'], [1006, 704, 40, '(DE'],
]
</script>

<template>
  <div class="screen">
    <header class="menubar">
      <svg class="apple" viewBox="0 0 16 18" width="14" height="17"><path d="M11 0Q11 3 8 4Q8 1 11 0ZM8 5Q12 3 14 6Q11 8 12 11Q13 13 15 13Q13 18 10.500 17Q8 16 6 17Q3 18 1 12Q0 5 5 4.500Q7 4.600 8 5Z" fill="#fff" /></svg>
      <b class="appname">AutoCAD 2019</b>
      <span v-for="m in menus" :key="m[0]" class="menu" :style="{ width: m[1] + 'px' }">{{ m[0] }}</span>
      <div class="tray">
        <svg viewBox="0 0 430 23" width="430" height="23">
          <path d="M3 17Q-3 13 3 10Q5 4 11 6Q16 5 18 10Q21 13 18 17Z" fill="#eef0f6" /><path d="M4 9Q11 2 16 8L9 15Z" fill="#8e95a5" />
          <circle cx="37" cy="11" r="6" fill="none" stroke="#8f96a0" stroke-width="3" /><path d="M32 15A7 7 0 0 0 43 13" fill="none" stroke="#d2d5da" stroke-width="2.500" />
          <path d="M63 17Q57 13 62 9Q64 4 70 6Q76 5 77 11V17Z" fill="none" stroke="#fff" stroke-width="2" /><path d="M64 14Q61 11 65 10Q69 10 70 13Q73 16 74 10Q72 7 69 8" fill="none" stroke="#fff" stroke-width="1.800" /><circle cx="74" cy="14" r="4.600" fill="#ff4c42" />
          <path d="M95 7L103 15L99 19V3L103 7L95 15" fill="none" stroke="#fff" stroke-width="1.200" />
          <path d="M119 8Q129 0 139 8M122 11Q129 6 136 11M125 14Q129 11 133 14" fill="none" stroke="#fff" stroke-width="2" /><circle cx="129" cy="16.500" r="1.500" fill="#fff" />
          <path d="M149 8H153L158 4V18L153 14H149Z" fill="#fff" /><path d="M160 8Q162 11 160 14M163 6Q166.500 11 163 16M166 4Q171 11 166 18" fill="none" stroke="#fff" stroke-width="1.500" />
          <path d="M217 5.500H213V16.500H217M228 5.500H232V16.500H228M234 9V13" fill="none" stroke="#fff" stroke-width="1.300" /><path d="M225 4L217 12H222L220 18L228 10H223Z" fill="#fff" />
          <circle cx="376" cy="10" r="4.800" fill="none" stroke="#fff" stroke-width="1.500" /><path d="M380 14L384 18" stroke="#fff" stroke-width="1.800" />
          <path d="M404 6.500H418M404 11.500H415M404 16H418" stroke="#fff" stroke-width="2" /><path d="M400 6.500H402M400 11.500H402M400 16H402" stroke="#fff" stroke-width="2" />
        </svg>
        <span class="batt">21 %</span><span class="clock">Mar 8:58 p. m.</span>
      </div>
    </header>
    <div class="work">
      <aside class="dockcol">
        <div class="dock">
          <div v-for="d in dock" :key="d.n" :class="d.k ? 'dsep' : 'ditem'">
            <template v-if="!d.k"><i :class="['dot', { lit: d.dot }]" /><Icon :art="d.a" /></template>
          </div>
        </div>
      </aside>
      <main class="window">
        <div class="titlebar">
          <div class="lights"><i class="red" /><i class="yel" /><i class="grn" /></div>
          <div class="title">
            <svg viewBox="0 0 16 16" width="15" height="16"><path d="M1 0H11L15 4V16H1Z" fill="#3f6480" /><path d="M0 16V11Q7 8 15 12V16Z" fill="#b98a42" /><path d="M4 1V10M0 5.500H11" stroke="#c0d4e2" /></svg>
            <span>TABLERO NEMA4X CUSTON CONTROL .dwg</span>
          </div>
          <div class="signin">
            <svg viewBox="0 0 14 16" width="15" height="16"><path d="M0 16Q0 12 5 11V9Q3 5 4 2Q7 -1 10 2Q11 5 9 9V11Q14 12 14 16Z" fill="#e4e6ea" /></svg>
            <span>Sign In</span><i class="tri" />
          </div>
        </div>
        <div class="toolbar">
          <div v-for="(grp, gi) in toolbar" :key="gi" class="tgroup"><span v-for="(a, i) in grp" :key="i" class="tslot"><Icon :art="a" /></span></div>
        </div>
        <div class="body">
          <aside class="left">
            <div class="ptabs"><b>Drafting</b><span class="mod">Modeling</span><span class="chev">«</span></div>
            <div class="palettes">
              <section v-for="(sec, si) in sections" :key="sec.name" class="sec" :class="{ tall: sec.tools.length > 11 }">
                <div class="shead"><i class="tri" /><span>{{ sec.name }}</span><Icon class="gear" :art="gear" :size="10" /></div>
                <div class="grid" :class="{ single: si === 8 }">
                  <div v-for="(k, i) in sec.tools" :key="i" :class="['tool', { big: k.big, on: k.on }]">
                    <Icon :art="k.art" :box="k.big ? 32 : 16" :size="k.big ? 32 : 16" /><i v-if="k.more" class="more" />
                  </div>
                </div>
              </section>
            </div>
            <div class="pfoot"><svg viewBox="0 0 60 12" width="60" height="12"><path d="M6 .5V11.500M.5 6H11.500M32 1.500H42M30 5.500H40M32 8.500H44M30 11.500H42" stroke="#d6d6d6" stroke-width="1.200" /></svg></div>
          </aside>
          <div class="rest">
            <div class="upper">
              <div class="center">
                <div class="dtabs">
                  <span class="start"><svg viewBox="0 0 14 14" width="14" height="14"><path d="M0 0H6.500V6.500H0Z" fill="#86cbf5" /><path d="M7.500 0H14V6.500H7.500ZM0 7.500H6.500V14H0ZM7.500 7.500H14V14H7.500Z" fill="#d9d9d9" /></svg></span>
                  <span class="plus"><svg viewBox="0 0 12 12" width="12" height="12"><path d="M6 0V12M0 6H12" stroke="#d6d6d6" /></svg></span>
                  <b class="dtab">TABLERO NEMA4X CUSTON CONTROL *</b>
                </div>
                <div class="viewport">
                  <svg class="cad" viewBox="223 108 812 633" width="812" height="633">
                    <g font-family="Open Sans, sans-serif" font-weight="600" font-size="10.500" fill="#8f9498">
                      <text x="239" y="128">+</text><text x="265" y="128" textLength="21">Top</text><text x="301" y="128" textLength="77">2D Wireframe</text>
                      <path d="M258.500 117V130M294.500 117V130" stroke="#8f9498" />
                    </g>
                    <!-- side view -->
                    <g fill="none" stroke="#fff">
                      <path d="M365.500 198V577M367.500 200V575M369.500 203V572M382.500 197V583M464.500 197V586M467.500 197V586M470.500 197V583M477.500 197V586" />
                      <path d="M372.500 197V586" stroke="#dadada" stroke-width="3" /><path d="M376.800 213V585" stroke="#eaeaea" stroke-width="3.400" /><path d="M380.500 215V585" />
                      <path d="M474 197V584" stroke="#e4e4e4" stroke-width="2.600" /><path d="M480.500 198V586" stroke="#ededed" stroke-width="3.800" />
                      <path d="M365 197.500H476M365 199H482M367 208.500H482M367 212.500H482M377 215.500H456" stroke-width="1.400" />
                      <path d="M371 201.500H476" stroke-width="4.500" stroke="#f4f4f4" /><path d="M380 205H465" stroke-width="2.500" />
                      <path d="M367 571.500H412M444 569.500H482M367 573H383M458 573H482M366 577.500H482M371 585H482" stroke-width="1.400" /><path d="M378 581.500H476" stroke-width="5" />
                      <path d="M365 203H383M365 206.500H383M365 210.500H383M464 203H483M464 206.500H483M464 210.500H483M371 580H384M464 575H482M365 574.500H384M370 583H384M464 581H482" stroke-width="2" stroke-dasharray="5 1" />
                      <path d="M370 218V247M371 530V556" stroke-width="8" stroke="#fafafa" />
                      <path d="M416 206.500H438V212H416ZM418.500 212V215H436V212" /><path d="M417 207H437" stroke-width="2" />
                      <path d="M444.500 218.500V561M446.500 218V552M451.500 218V552M443 218H453M453.500 216V233" />
                      <path d="M444 553H451V568H444ZM444 557H451M444 561H451M448 552V571" stroke-width="2" /><path d="M453.500 566V579" />
                      <path d="M364 369.500H359.500Q356 393 359.500 417.500H364" />
                      <path d="M363 261V324" stroke-width="3" /><path d="M365 260V325" /><path d="M367 266H376V319H367" fill="#20272f" stroke-width="1.500" />
                      <path d="M376 267.500H389.500V314H376Z" fill="#20272f" stroke="#dedeff" stroke-width="1.600" /><path d="M380.500 268V314M385.500 268V314M388 268V314M376 283.500H386M376 305H386" />
                      <path d="M372 287Q377 293 372 302M380 270V284M380 305V313M382 317H388" stroke-width="3.500" />
                      <path d="M412 268.500H402.500V314H412M406.500 270V312M409.500 270V290M402 271H412" /><path d="M405 280V293M403 312H412" stroke-width="2.600" />
                    </g>
                    <g fill="none" stroke="#8a8a8a">
                      <path d="M412.500 218.500H442.500V573H412.500ZM412.500 249.500H442.500M412.500 218.500L442.500 249.500M442.500 218.500L412.500 249.500" />
                      <path v-for="y in slats" :key="y" :d="`M412.500 ${y}H442.500`" />
                    </g>
                    <g fill="#fff"><circle v-for="y in [236, 265, 439, 518, 546]" :key="y" cx="473" :cy="y" r="2" /></g>
                    <!-- cabinet frame -->
                    <g id="frame">
                      <g fill="none" stroke="#fff">
                        <path d="M643.500 209V575M646.500 209V575M649.500 198V586M657.500 198V575M660.500 216V570" />
                        <path d="M653.500 198V580" stroke="#e6e6e6" stroke-width="4.400" />
                        <path d="M649 198.500H870M649 205.500H870" stroke-width="1.400" /><path d="M649 585.500H870" />
                        <path d="M660 200.500H860" stroke-width="2" stroke="#cfcfcf" /><path d="M660 204H860" stroke-width="4" /><path d="M661 578.500H858" stroke-width="6.500" stroke="#f8f8f8" /><path d="M655 583H865" stroke="#bbb" />
                        <path d="M643 210H664M643 212.500H664M643 215.500H664M645 203H662M649 200.500H662M649 207H662M645 567H662M643 570H664M643 573H664M648 576.500H664M645 580H664" stroke-width="2" stroke-dasharray="6 .8" />
                        <rect x="645.500" y="380.500" width="13" height="49" fill="#20272f" stroke="#d8d8f4" /><path d="M645 399.500H659M645 410.500H659" />
                      </g>
                      <g fill="#fff"><circle v-for="y in [237, 266, 409, 517]" :key="y" cx="651.500" :cy="y" r="2" /></g>
                    </g>
                    <use href="#frame" x="363" />
                    <g fill="none" stroke="#fff">
                      <path d="M858.500 216V570M861.500 198V586M865.500 198V580M869.500 198V586M872.500 209V575M875 209V575" /><path d="M867.500 210V580" stroke="#e0e0e0" stroke-width="2.400" /><path d="M863.500 198V580" stroke="#bdbdbd" />
                      <path d="M856 210H875M856 212.500H875M856 215.500H875M858 203H873M858 200.500H870M858 207H870M858 567H875M856 570H875M856 573H875M858 576.500H873M858 580H873" stroke-width="2" stroke-dasharray="6 .8" />
                      <path d="M867.500 527V556" stroke-width="8" />
                    </g>
                    <g fill="#fff"><circle v-for="y in [237, 266, 465, 517]" :key="y" cx="867" :cy="y" r="2.200" /></g>
                    <path d="M664.500 209V573.500H857.500V209M680 207.500H857M680 575H840" fill="none" stroke="#0202ee" stroke-width="1.500" />
                    <g fill="none" stroke="#7c7c7c">
                      <path d="M665.500 208.500H856.500L840.500 223.500H680.500ZM665.500 208.500V572M856 209V573M680.500 223.500V573M840.500 223.500V309.500M680.500 309.500H857V333.500H680.500M741.500 333.500V573H756.500V333.500M756.500 573H772.500V333.500M832.500 333.500V573M680.500 528.500H741M680.500 543.500H741M771.500 528.500H832M771.500 543.500H832M666 573H681M832 573H857M684 259.500H840V271.500H684ZM704 481V520H716V333" />
                    </g>
                    <!-- control modules -->
                    <g fill="#20272f" stroke="#fff" stroke-width="1.500">
                      <rect x="690.500" y="240.500" width="14" height="51" /><path d="M693 242H702M694 288H701M698 254V274L694 277V285M699 256H703V263H699ZM687 256H690V275H687Z" stroke-width="2.500" />
                      <path d="M705 256H718V276H705ZM709 246H716V284H709Z" fill="#fff" /><path d="M710 262H715M710 266H715" stroke="#333" />
                      <rect x="727" y="244" width="20" height="47" /><path d="M727 245H747M731 249H744M731 254H744M727 259H747M727 267H747M729 271H738M733 276H737M733 280H742M730 286H744" stroke-width="2.500" stroke-dasharray="6 .8" />
                      <g v-for="m in modules" :key="m[0]"><rect :x="m[0]" y="243.500" :width="m[1]" height="47" /><path :d="`M${m[0] + 1} 242.500H${m[0] + m[1] - 1}M${m[0]} 247H${m[0] + m[1]}M${m[0]} 291H${m[0] + m[1]}`" stroke-width="3.200" stroke-dasharray="7 .8" /><path :d="`M${m[0] + 1} 252H${m[0] + m[1]}`" /></g>
                      <path d="M747.500 243V290M768 243V290M782 243V290M809.500 243V290M823 243V290M837 246V288" stroke-width="2.800" /><path d="M783 263.500H808" stroke-width="1" />
                    </g>
                    <path d="M732 277H738" stroke="#30d030" /><path d="M736 292H742M688 270H690M708 270H716M694 255H697M694 261H697" stroke="#e8ee20" stroke-width="1.500" />
                    <!-- terminal strips -->
                    <g v-for="b in termA" :key="'a' + b[1]">
                      <rect :x="b[0]" :y="b[1]" :width="b[2]" :height="b[3]" fill="#fff" />
                      <path :d="`M${b[0] + 5} ${b[1]}V${b[1] + b[3]}M${b[0] + 9.500} ${b[1]}V${b[1] + b[3]}M${b[0] + 17} ${b[1]}V${b[1] + b[3]}`" stroke="#bcbcbc" stroke-dasharray="2 1.500" />
                      <path :d="`M${b[0] + 5.500} ${b[1]}V${b[1] + b[3]}M${b[0] + 16.500} ${b[1]}V${b[1] + b[3]}`" stroke="#e9e94e" stroke-dasharray="2 14" />
                    </g>
                    <path d="M703 335H717" stroke="#ddd" stroke-width="2" />
                    <path d="M700 401H720V407H700Z" fill="#fff" /><path d="M692.500 406H727V412H692.500Z" fill="#20272f" stroke="#e3e360" /><path d="M695 409H703M720 409H727" stroke="#fff" stroke-width="4" />
                    <path d="M693 416H730V443H693Z" fill="#fff" /><path d="M706 417V442M713 417V442" stroke="#20272f" stroke-width="3.500" stroke-dasharray="5 2" /><path d="M693 423.500H701M693 430.500H701M693 437H701M720 423.500H730M720 430.500H730M720 437H730" stroke="#555" />
                    <g fill="none" stroke="#fff"><rect x="688" y="489" width="46" height="28" rx="2" stroke-width="2.500" /><rect x="691" y="491.500" width="40" height="23" rx="1" /><rect x="697" y="496" width="29" height="15" stroke-width="2" /><path d="M699 501.500H724M703 506H722" stroke-width="4" stroke-dasharray="5 1.500 3 1" /><path d="M735 504V516M718 491H724M696 515H703M728 499V507" stroke-width="3.500" /></g>
                    <path d="M791 336H813V522H791Z" fill="#e8e8e8" />
                    <path d="M786 453H819V471H786Z" fill="#fff" /><path d="M791 380.500H814M791 383.500H814M791 426.500H814M791 430.500H814" stroke="#444" />
                    <g v-for="b in termB" :key="'b' + b[1]">
                      <rect :x="b[0]" :y="b[1]" :width="b[2]" :height="b[3]" fill="#fff" />
                      <path :d="`M${b[0] + 4.500} ${b[1]}V${b[1] + b[3]}M${b[0] + 12.500} ${b[1]}V${b[1] + b[3]}M${b[0] + 17} ${b[1]}V${b[1] + b[3]}M${b[0] + 21} ${b[1]}V${b[1] + b[3]}M${b[0] + 26} ${b[1]}V${b[1] + b[3]}`" stroke="#8d8d8d" stroke-dasharray="2 1.500" />
                      <path :d="`M${b[0] + 12.500} ${b[1]}V${b[1] + b[3]}M${b[0] + 35.500} ${b[1]}V${b[1] + b[3]}`" stroke="#e9e94e" stroke-dasharray="2 7" />
                    </g>
                    <path d="M800.500 454H808M800.500 457H808M800.500 460H808M800.500 463H808M800.500 466H808M800.500 469H808" stroke="#555" />
                    <path d="M796 337V342M796 372V376M796 420V424M796 473V480M796 518V522" stroke="#e9e94e" stroke-width="2" />
                    <!-- ground bars -->
                    <g v-for="x in [682, 774]" :key="x">
                      <rect :x="x + 0.500" y="552.500" width="56" height="8" fill="#181d23" stroke="#fff" /><path :d="`M${x + 9} 555H${x + 50}`" stroke="#fff" stroke-width="2.500" stroke-dasharray="2.500 2" /><path :d="`M${x + 15} 559H${x + 45}`" stroke="#fff" stroke-width="2" stroke-dasharray="2.500 3" />
                      <circle :cx="x + 5" cy="556.500" r="3" fill="#fff" stroke="#6b1f1b" stroke-width="1.800" /><circle :cx="x + 52" cy="556.500" r="3" fill="#fff" stroke="#6b1f1b" stroke-width="1.800" />
                    </g>
                    <path d="M682 568.500H741M773 568.500H832" stroke="#fff" /><path d="M683 570H693M825 570H832" stroke="#fff" stroke-width="3" />
                    <path d="M682 563H687M835 224.500H840" stroke="#0202ee" stroke-width="2" />
                    <!-- wireway labels -->
                    <g font-family="Open Sans, sans-serif" font-weight="300" font-size="13" fill="#8f8f8f">
                      <text x="691" y="221" textLength="64">40WX80H</text><text x="691" y="326" textLength="64">60WX80H</text>
                      <text transform="translate(852 297) rotate(-90)" textLength="63">40WX80H</text><text transform="translate(753 431) rotate(-90)" textLength="63">40WX80H</text><text transform="translate(768 504) rotate(-90)" textLength="63">40WX80H</text>
                    </g>
                    <!-- balloons -->
                    <g v-for="(b, i) in balloons" :key="'n' + i">
                      <polygon :points="oct(b[0], b[1])" :fill="i < 8 ? '#20272f' : 'none'" stroke="#00e000" stroke-width="1.200" />
                      <text :x="b[0]" :y="b[1] + 4.900" text-anchor="middle" font-family="Open Sans, sans-serif" font-size="14" fill="#fff">{{ b[2] }}</text>
                    </g>
                    <!-- dimensions -->
                    <path d="M366.500 154V198M482.500 154V198M643.500 158V209M875.500 158V209M595 202.500H648M595 584.500H651" stroke="#f00000" fill="none" />
                    <path d="M367 153.500H482M644 157.500H875M595.500 203V584" stroke="#00e400" fill="none" />
                    <path d="M366 153.500L375 152V155.500ZM483 153.500L474 152V155.500ZM643 157.500L652 156V159.500ZM876 157.500L867 156V159.500ZM595.500 202L594 211H597.500ZM595.500 585L594 576H597.500Z" fill="#00e400" />
                    <g font-family="Open Sans, sans-serif" font-size="14.500" fill="#f6f600" text-anchor="middle"><text x="424.500" y="152" textLength="24.500">300</text><text x="760" y="156" textLength="25">600</text><text transform="translate(594 393.500) rotate(-90)" textLength="25">988</text></g>
                    <!-- captions -->
                    <g font-family="Liberation Serif, serif" font-size="25" fill="#ececec">
                      <text v-for="w in words" :key="w[0] + '-' + w[1]" :x="w[0]" :y="w[1]" :textLength="w[2]">{{ w[3] }}</text>
                    </g>
                    <path d="M240.500 675V720.500M246 725.500H291M236.500 720.500H245.500V729.500H236.500ZM240.500 720V725.500H246M242 658L248 664L254 658M248 664V671M295 711L308 724M308 711L295 724" fill="none" stroke="#eee" stroke-width="1.200" />
                    <!-- crosshair -->
                    <path d="M902 398.500H931M938 398.500H967M934.500 366V395M934.500 402V431M931.500 395.500H937.500V401.500H931.500Z" fill="none" stroke="#f4f4f4" />
                    <!-- view cube -->
                    <circle cx="960" cy="183" r="47.500" fill="none" stroke="#474f59" stroke-width="13" />
                    <rect x="937.500" y="160.500" width="45" height="45" fill="#acacae" stroke="#c2c2c4" /><rect x="946" y="169" width="28" height="28" fill="#9ba2ae" />
                    <text x="960" y="187.300" text-anchor="middle" font-family="Open Sans, sans-serif" font-weight="600" font-size="11.500" textLength="20" lengthAdjust="spacingAndGlyphs" fill="#3c4553">TOP</text>
                    <g font-family="Liberation Sans, sans-serif" font-weight="700" font-size="20" fill="#adadad" text-anchor="middle"><text x="960" y="140.500">N</text><text x="960" y="240.500">S</text><text x="909.500" y="190">W</text><text x="1010" y="190">E</text></g>
                    <rect x="934" y="263" width="50" height="12" rx="3" fill="#7f8791" /><text x="950" y="273" text-anchor="middle" font-family="Liberation Sans, sans-serif" font-size="11" fill="#e8eaec" textLength="25">WCS</text><path d="M970 266H979L974.500 272Z" fill="none" stroke="#e8eaec" />
                  </svg>
                  <div class="cmd"><span class="prompt">&gt;_<i class="tri" /></span><em>Type a command</em><i class="up" /></div>
                </div>
              </div>
              <aside class="right">
                <div class="rtabs">
                  <span class="rt on"><Icon :art="layers() + o(13, 12, 3.600, W) + s('M13 11V14M13 9V10', K, 1.300)" /></span>
                  <span class="rt"><Icon :art="f('M1 1H15V14H1Z', '#c9c9c9') + f('M3 5H5V7H3ZM7 5H9V7H7ZM11 5H13V7H11ZM3 9H5V11H3ZM7 9H9V11H7ZM11 9H13V11H11Z', '#4a4a4a') + s('M1 3.500H15', '#666')" /></span>
                  <span class="rfill" /><span class="rchev">»</span>
                </div>
                <div class="rhead lay"><span>Layers</span><Icon :art="dockIn" :size="15" /></div>
                <div class="ltools"><span v-for="(a, i) in layerTools" :key="i"><Icon :art="a" /></span></div>
                <div class="sel wide">
                  <svg viewBox="0 0 90 16" width="90" height="16"><circle cx="8" cy="8" r="4.200" fill="#d8d8d8" /><path d="M20 8H27V13H20Z" fill="#737373" /><path d="M21.500 8V5A2 2 0 0 1 25.500 5V8M38 8H46M40 4L44 12M44 4L40 12M68.500 4H76V12H68.500ZM73 9H80M76 6L79 12" stroke="#737373" fill="none" /><rect x="54" y="3.500" width="9" height="9" fill="#0a46ff" stroke="#111" /></svg>
                  <b>AM_4</b><i class="tri" />
                </div>
                <div class="sel wide second"><b>Unsaved Layer State</b><i class="tri" /></div>
                <div class="showlist"><i class="rtri" /><span>Show Layer List</span></div>
                <div class="rhead phead"><span>Properties</span><div class="seg"><i>All</i><b>My</b></div><Icon :art="s('M10 1H1V14H8M3 4.500H10M3 7.500H8M3 10.500H6', W, 1.200) + s('M8 12L13 6', W, 3.200) + f('M6 15L7 11L10 14Z')" :size="15" /><Icon class="din" :art="dockIn" :size="14" /></div>
                <div class="sel wide model"><span>Model Space</span><i class="tri" /></div>
                <div v-for="p in props" :key="p.l" class="prow">
                  <label>{{ p.l }}</label>
                  <div class="field" :class="p.k">
                    <svg v-if="p.k === 'color'" class="sw" viewBox="0 0 9 9" width="9" height="9"><rect x=".5" y=".5" width="8" height="8" fill="#0a46ff" stroke="#111" /></svg>
                    <i v-if="p.k === 'line'" class="ln" />
                    <svg v-if="p.k === 'multi'" class="ml" viewBox="0 0 12 12" width="12" height="12"><path d="M6 0L8 6L12 11L6 8L0 11L4 6Z" fill="#0c93e8" /></svg>
                    <i v-if="p.k === 'trans'" class="mk" />
                    <b>{{ p.v }}</b>
                    <i v-if="['color', 'sel', 'line', 'multi'].includes(p.k)" class="tri" />
                  </div>
                  <div v-if="p.k === 'trans'" class="side tside"><Icon :art="layers() + f('M6 0H14L9 4H1Z', B) + s('M1 6.500H9L13 3', B, 1.500)" :size="13" /><i class="tri" /></div>
                  <div v-if="p.k === 'height'" class="side hside"><Icon :art="s('M1 0V15M15 0V6') + s('M2 3H14', B, 1.300) + f('M2 3L5 1V5ZM14 3L11 1V5Z', B) + s('M11.500 7V16M7 11.500H16') + o(11.500, 11.500, 2.200, 'none', W)" /></div>
                  <div v-if="p.k === 'dpi'" class="side dside"><i class="up" /><i class="tri" /></div>
                </div>
              </aside>
            </div>
            <div class="ltabs"><span class="model-tab">Model</span><span class="lplus"><svg viewBox="0 0 12 12" width="12" height="12"><path d="M6 .5V11.500M.5 6H11.500" stroke="#d6d6d6" /></svg></span><b>GAB.</b></div>
            <div class="statusbar">
              <span class="coord">21222.0064, −3576.8099, 0.0000</span>
              <span v-for="(st, i) in status" :key="i" :class="['st', { on: st.on, nar: i > 11 && i < 15 }]"><Icon :art="st.a" /></span>
              <span class="scale">0.108353</span><i class="tri" />
              <span v-for="(a, i) in status2" :key="'z' + i" class="st last"><Icon :art="a" /></span>
            </div>
          </div>
        </div>
      </main>
    </div>
  </div>
</template>

<style>
html, body { margin: 0; overflow: hidden; background: #0e1a2c; }
</style>

<style scoped>
* { box-sizing: border-box; }
svg { display: block; flex: none; overflow: visible; }
.screen { width: 1280px; height: 800px; overflow: hidden; display: flex; flex-direction: column; background: linear-gradient(#1c3454, #122b50 55%, #0c1728); font-family: "Open Sans", "Noto Sans", sans-serif; color: #d6d6d6; }
.menubar { height: 23px; flex: none; display: flex; align-items: center; background: linear-gradient(90deg, #18233a, #162038 50%, #161926); color: #fff; font: 500 13.6px Inter, sans-serif; border-bottom: 1px solid #06090f; white-space: nowrap; }
.apple { margin-left: 20px; }
.appname { margin-left: 21px; width: 119px; font-weight: 700; font-size: 14px; letter-spacing: 0; }
.tray { width: 430px; margin-left: auto; margin-right: 12px; position: relative; }
.batt, .clock { position: absolute; top: 3px; }
.batt { left: 181px; font-size: 12px; top: 4px; }
.clock { left: 254px; font-size: 13.600px; }
.work { flex: 1; display: flex; min-height: 0; }
.dockcol { width: 29px; flex: none; padding-top: 11px; }
.dock { width: 27px; height: 753px; border-radius: 0 5px 5px 0; border: 1px solid #44597a; border-left: 0; background: linear-gradient(#264873, #2e5384 25%, #18386a 48%, #0c2248 62%, #13213a 80%, #1b2737); }
.ditem { height: 19.820px; display: flex; align-items: center; }
.dot { width: 3px; height: 3px; border-radius: 50%; margin: 0 2px 0 3px; }
.dot.lit { background: #9fbbdc; }
.dsep { margin: 0 3px 3px; border-bottom: 1px solid #4d5b70; height: 7px; }
.window { flex: 1; min-width: 0; height: 776px; display: flex; flex-direction: column; background: #535353; border-left: 1px solid #111; border-top: 1px solid #858585; border-radius: 6px 6px 4px 6px; box-shadow: -1px 0 1px #000; overflow: hidden; }
.titlebar { height: 21px; flex: none; display: flex; align-items: flex-start; justify-content: space-between; }
.lights { width: 119px; display: flex; gap: 8px; padding: 4px 0 0 7px; }
.lights i { width: 12px; height: 12px; border-radius: 50%; }
.red { background: radial-gradient(circle, #8b0e12 0 2px, #fc5652 2.500px); }
.yel { background: #fdbc4c; }
.grn { background: #00ca56; }
.title { display: flex; gap: 5px; align-items: center; padding-top: 3px; margin-left: 4px; font: 12.800px/16px Inter, sans-serif; color: #c8c8c8; white-space: nowrap; }
.signin { width: 119px; height: 21px; display: flex; align-items: center; background: #474747; border: 1px solid #3c3c3c; padding: 0 3px 0 5px; font: 12px Inter, sans-serif; color: #c0c0c0; }
.signin span { flex: 1; margin-left: 5px; }
.tri { width: 0; height: 0; border: 3.500px solid transparent; border-top: 5px solid #d0d0d0; border-bottom: 0; flex: none; }
.signin .tri { border-width: 5px 4.500px 0; border-top-color: #999; }
.toolbar { height: 31px; flex: none; display: flex; gap: 49px; padding: 5px 0 0 65px; }
.tgroup { display: flex; height: 16px; }
.tslot { width: 32.800px; display: flex; justify-content: center; }
.body { flex: 1; display: flex; min-height: 0; }
.left { width: 183px; flex: none; display: flex; flex-direction: column; }
.ptabs { height: 21px; flex: none; display: flex; font: 12.600px/21px "Liberation Sans", sans-serif; text-align: center; }
.ptabs b { width: 79px; color: #fff; font-weight: 400; text-shadow: .3px 0 #fff; border-top: 1px solid #444; line-height: 20px; }
.ptabs .mod { width: 84px; background: #4a4a4a; color: #7b7b7b; border: 1px solid #404040; line-height: 18px; }
.ptabs .chev { width: 20px; border: 1px solid #404040; border-left: 0; color: #a8a8a8; line-height: 16px; background: #4c4c4c; font-size: 16px; }
.palettes { height: 681px; overflow: hidden; flex: none; margin-top: -3px; }
.sec { height: 72px; margin: 0 5px 0 2px; border-top: 1px solid #444; }
.sec.tall { height: 96px; }
.sec:first-child { border-top-color: transparent; }
.shead { height: 21px; padding-top: 3px; display: flex; align-items: center; font: 11.300px "Liberation Sans", sans-serif; color: #d4d4d4; text-shadow: .3px 0 #d4d4d4; }
.shead .tri { border-width: 5px 4px 0; border-top-color: #c9c9c9; margin: 0 4px 0 1px; }
.gear { margin-left: auto; }
.grid { display: grid; grid-template-columns: repeat(8, 22px); grid-template-rows: 22px 22px 26px; margin-left: 1px; }
.grid.single { grid-template-rows: 24px; margin-top: -2px; }
.tool { position: relative; display: flex; align-items: center; justify-content: center; }
.tool.big { grid-column: span 2; grid-row: span 2; }
.tool.on { background: #404040; }
.more { position: absolute; right: 0; bottom: 2px; width: 0; height: 0; border-bottom: 3.500px solid #a8a8a8; border-left: 3.500px solid transparent; }
.big .more { bottom: 0; }
.pfoot { flex: 1; padding: 7px 0 0 13px; }
.rest { flex: 1; min-width: 0; display: flex; flex-direction: column; border-left: 1px solid #444; margin-left: -1px; }
.upper { display: flex; height: 677px; flex: none; }
.center { width: 831px; flex: none; display: flex; flex-direction: column; }
.dtabs { height: 23px; flex: none; display: flex; border-top: 1px solid #424242; border-bottom: 1px solid #444; }
.dtabs span { width: 24px; display: flex; align-items: center; justify-content: center; border-right: 1px solid #424242; }
.dtab { width: 227px; background: #6f6f6f; color: #f2f2f2; font: 700 11px/21px "Liberation Sans", sans-serif; padding-left: 3px; letter-spacing: -.4px; white-space: nowrap; }
.viewport { flex: 1; position: relative; background: #aecff2; padding: 9px 0 0 10px; }
.cad { background: #20272f; overflow: hidden; }
.cmd { position: absolute; left: 166px; top: 629px; width: 499px; height: 25px; background: #444; border: 1px solid #363636; display: flex; align-items: center; font-size: 11.500px; }
.prompt { width: 39px; height: 100%; border-right: 1px solid #353535; display: flex; align-items: center; justify-content: center; gap: 3px; color: #bdbdbd; font: 700 10px "DejaVu Sans", sans-serif; }
.cmd em { flex: 1; color: #9c9c9c; padding-left: 4px; letter-spacing: .05px; }
.up { width: 0; height: 0; border: 3px solid transparent; border-bottom: 5px solid #a4a4a4; border-top: 0; margin-right: 4px; }
.right { flex: 1; min-width: 0; font-size: 11px; }
.rtabs { height: 22px; display: flex; background: #4b4b4b; border-top: 1px solid #414141; }
.rtabs span { border-right: 1px solid #404040; border-bottom: 1px solid #404040; display: flex; align-items: center; justify-content: center; }
.rt { width: 52px; }
.rtabs .on { background: #535353; border-bottom: 0; }
.rfill { flex: 1; }
.rchev { width: 25px; font: 16px "Liberation Sans", sans-serif; color: #999; }
.rhead { height: 22px; display: flex; align-items: center; padding: 0 10px; font: 12.300px Inter, sans-serif; color: #e2e2e2; }
.rhead span { flex: 1; }
.lay { height: 19px; }
.phead { padding-bottom: 5px; }
.seg { display: flex; font: 10px/13px "Liberation Sans", sans-serif; margin: -4px 9px 0 0; text-align: center; }
.seg i { width: 28px; background: #4a4a4a; color: #757575; font-style: normal; }
.seg b { width: 32px; background: #6e6e6e; color: #eee; font-weight: 400; }
.rhead svg { margin-top: -2px; }
.rhead .din { margin-left: 10px; }
.ltools { display: flex; height: 41px; padding: 13px 0 0 10px; }
.ltools span { width: 24px; display: flex; justify-content: center; height: 16px; }
.sel { display: flex; align-items: center; border: 1px solid #444; background: #595959; border-radius: 2px; box-shadow: 0 1px #5e5e5e; color: #fff; }
.sel b { flex: 1; font-weight: 700; }
.wide { height: 25px; width: 216px; margin: 0 0 0 11px; padding: 0 4px 0 6px; font-size: 11px; }
.wide svg + b { padding-left: 2px; }
.second { margin-top: 3px; }
.showlist { height: 34px; margin-top: 3px; display: flex; align-items: center; padding: 0 0 13px 15px; border-bottom: 1px solid #464646; color: #c4c4c4; font-weight: 600; font-size: 11px; }
.rtri { width: 0; height: 0; border: 4px solid transparent; border-left: 7px solid #8d8d8d; border-right: 0; margin-right: 12px; }
.model { height: 22px; width: 213px; margin: 4px 0 4px 12px; color: #8b8b8b; font-weight: 600; background: #535353; border-color: #4c4c4c; }
.model span { flex: 1; }
.model .tri { border-top-color: #858585; }
.prow { height: 23px; display: flex; align-items: center; padding-left: 10px; font-size: 10.900px; white-space: nowrap; }
.prow label { width: 91px; text-align: right; color: #cbcbcb; font-weight: 600; font-size: 11px; margin-right: 9px; }
.field { width: 113px; height: 19px; display: flex; align-items: center; border: 1px solid #454545; background: #595959; border-radius: 2px; padding: 0 4px 0 6px; color: #fff; box-shadow: 0 1px #606060; }
.field b { flex: 1; }
.inp, .height, .off, .dpi { padding-left: 4px; }
.off { background: #535353; border-color: #4d4d4d; box-shadow: none; }
.off b { color: #858585; font-weight: 600; }
.sw { margin: 0 11px 0 2px; }
.ml { margin: 0 4px 0 2px; }
.ln { width: 32px; height: 1px; background: #eee; margin-right: 14px; }
.trans { width: 71px; text-align: right; border-left: 1px dashed #4e9de0; }
.mk { width: 1px; height: 6px; background: #888; margin: 8px 0 0 26px; }
.height { width: 91px; }
.dpi { width: 97px; }
.side { height: 19px; border: 1px solid #454545; border-radius: 2px; background: #595959; display: flex; align-items: center; justify-content: center; }
.tside { width: 38px; margin-left: 4px; gap: 9px; }
.hside { width: 20px; margin-left: 2px; }
.dside { width: 13px; margin-left: 3px; flex-direction: column; gap: 3px; }
.dside .up { margin: 0; }
.ltabs { height: 24px; flex: none; display: flex; border-top: 1px solid #434343; border-bottom: 1px solid #434343; font-size: 11px; line-height: 22px; text-align: center; }
.model-tab { width: 60px; border-right: 1px solid #434343; color: #b4b4b4; }
.lplus { width: 24px; display: flex; align-items: center; justify-content: center; border-right: 1px solid #434343; }
.ltabs b { width: 58px; background: #6f6f6f; color: #fff; }
.statusbar { flex: 1; display: flex; align-items: center; font-size: 11.200px; color: #c9c9c9; white-space: nowrap; }
.coord { width: 517px; text-align: right; margin-right: 1px; letter-spacing: .52px; flex: none; font-weight: 500; }
.st { width: 20px; height: 20px; margin: 0 1px; display: flex; align-items: center; justify-content: center; flex: none; }
.st.on { background: #5a8fbd; }
.st.nar { width: 17.500px; }
.scale { width: 56px; flex: none; letter-spacing: .3px; }
.last { margin-left: 1px; }
.statusbar .tri { margin: 0 8px 0 0; }
</style>
